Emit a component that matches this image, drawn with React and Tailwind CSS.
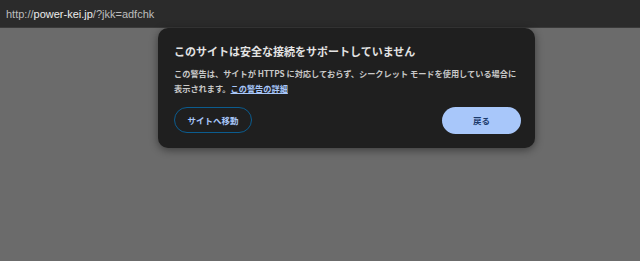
export default function App() {
  return (
    <div
      className="relative w-[640px] h-[261px] bg-[#6b6b6b] overflow-hidden"
      style={{ fontFamily: '"Noto Sans CJK JP", "Noto Sans", sans-serif' }}
    >
      {/* address bar */}
      <div className="h-[28px] bg-[#2b2b2b] border-b border-[#3a3a3a] flex items-center px-[6px] pt-[1px]">
        <span className="text-[11px] text-[#bdbdbd]" style={{ fontFamily: '"Liberation Sans", Arial, sans-serif' }}>
          http://<span className="text-[#ececec]">power-kei.jp</span>/?jkk=adfchk
        </span>
      </div>

      {/* warning dialog */}
      <div className="absolute left-[158px] top-[28px] w-[377px] h-[120px] rounded-[10px] bg-[#1f1f1f] shadow-[0_2px_8px_rgba(0,0,0,0.45)] px-[16px] pt-[16px]">
        <h1 className="text-[11px] leading-[14px] font-bold text-[#e3e3e3] whitespace-nowrap">
          このサイトは安全な接続をサポートしていません
        </h1>
        <p className="mt-[8px] text-[8.2px] leading-[15px] font-bold text-[#c8c8c8] whitespace-nowrap">
          この警告は、サイトが HTTPS に対応しておらず、シークレット モードを使用している場合に
          <br />
          表示されます。<span className="text-[#a8c7fa] underline">この警告の詳細</span>
        </p>
        <div className="mt-[11px] flex justify-between">
          <button className="w-[78px] h-[26px] rounded-full border-[1.5px] border-[#0b5c8f] text-[8.5px] font-bold text-[#a8c7fa]">
            サイトへ移動
          </button>
          <button className="mr-[-2px] w-[79px] h-[27px] rounded-full bg-[#a8c7fa] text-[8.5px] font-bold text-[#1b3a6b]">
            戻る
          </button>
        </div>
      </div>
    </div>
  );
}
